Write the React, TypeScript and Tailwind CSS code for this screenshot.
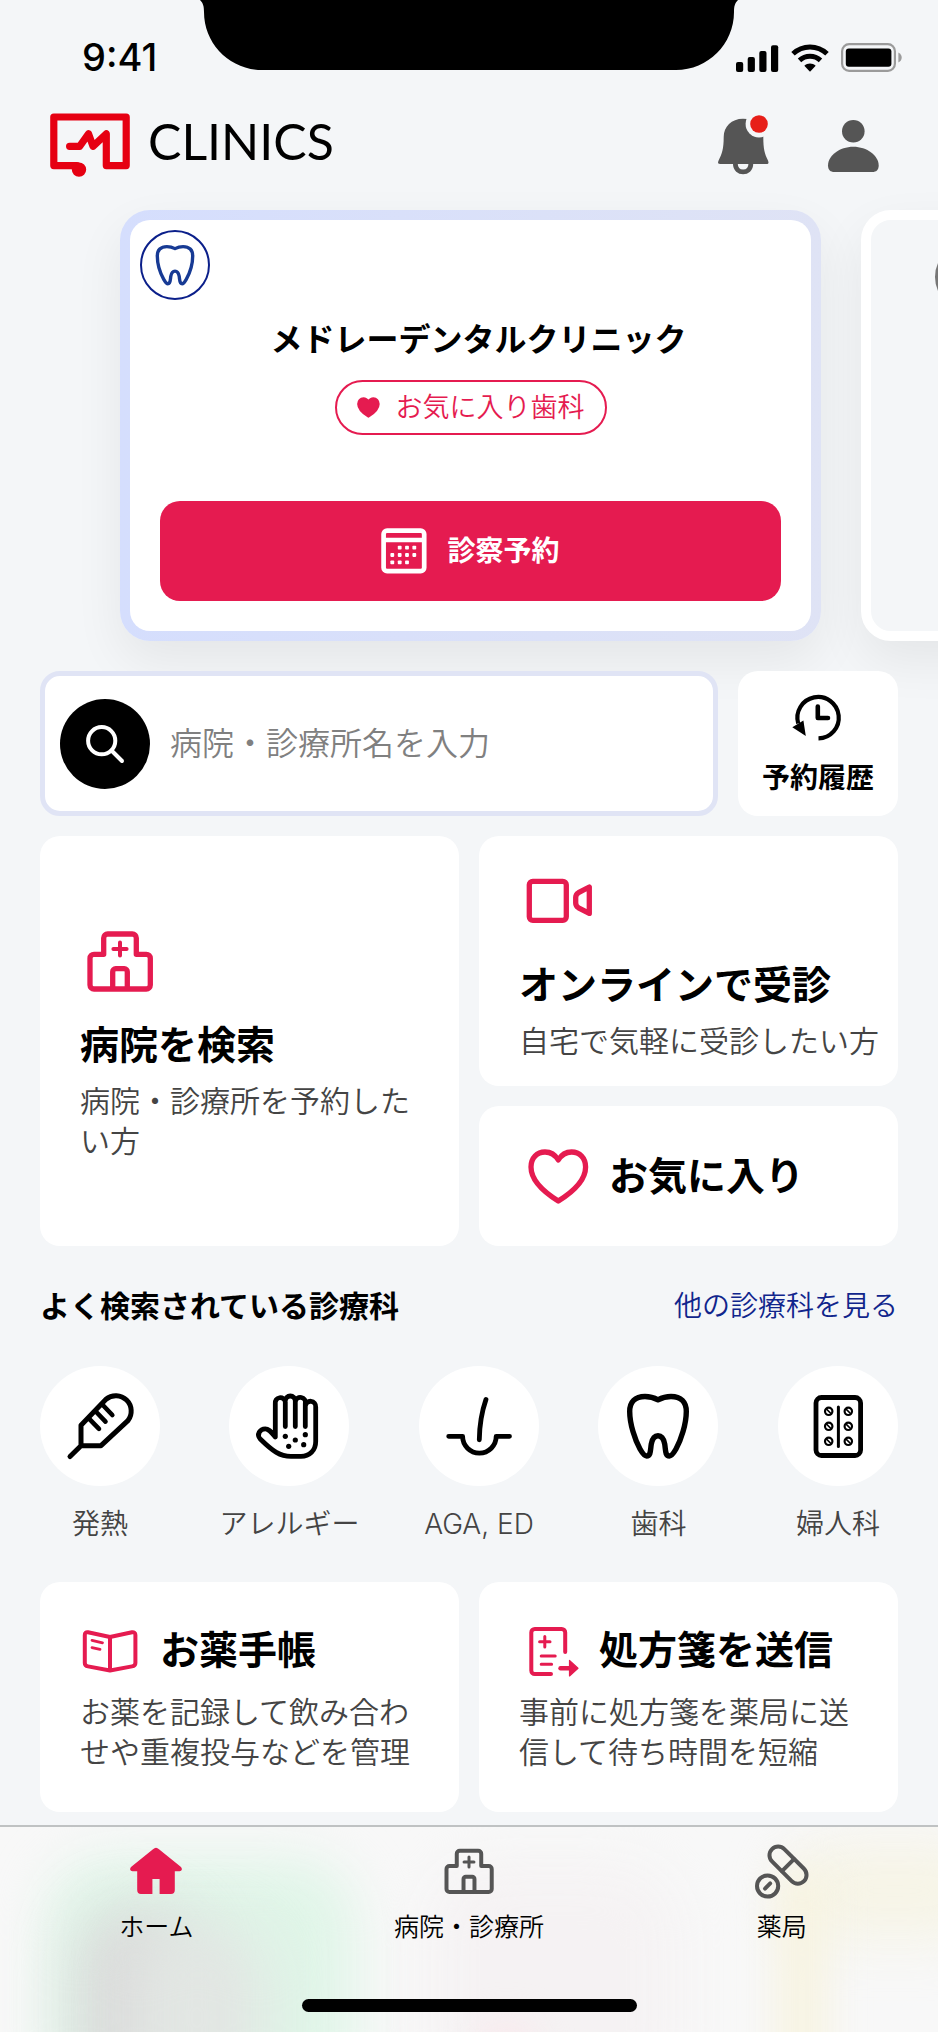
import React from 'react';

type IconProps = { className?: string };

function Tooth({ className }: IconProps) {
  return (
    <svg viewBox="0 0 80 80" className={className} fill="none" stroke="currentColor" strokeWidth="5.4" strokeLinejoin="round" aria-hidden="true">
      <path d="M40 13.8C35.5 11.4 31 10.5 27 10.5C17 10.5 11.7 16 11.7 25.5C11.7 38 17 54 22 63C24 66.5 26 70 28.6 70C33 70 32.3 64 33.3 58C34.2 53 36 49.7 40 49.7C44 49.7 45.8 53 46.7 58C47.7 64 47 70 51.4 70C54 70 56 66.5 58 63C63 54 68.3 38 68.3 25.5C68.3 16 63 10.5 53 10.5C49 10.5 44.5 11.4 40 13.8Z" />
    </svg>
  );
}

function Hospital({ className }: IconProps) {
  return (
    <svg viewBox="0 0 80 80" className={className} fill="none" stroke="currentColor" strokeWidth="5.3" strokeLinejoin="round" aria-hidden="true">
      <path d="M23.7 33.3V17a4 4 0 0 1 4-4h24.6a4 4 0 0 1 4 4v16.3h10a4 4 0 0 1 4 4V64a4 4 0 0 1-4 4H14a4 4 0 0 1-4-4V37.3a4 4 0 0 1 4-4z" />
      <path d="M32.7 68V50.7a3 3 0 0 1 3-3h8.6a3 3 0 0 1 3 3V68" />
      <path d="M40 21.4v13.2M33.4 28h13.2" strokeWidth="4" strokeLinecap="round" />
    </svg>
  );
}

function Video({ className }: IconProps) {
  return (
    <svg viewBox="0 0 80 80" className={className} fill="none" stroke="currentColor" strokeWidth="5.3" strokeLinejoin="round" aria-hidden="true">
      <rect x="10.3" y="20.3" width="37" height="39" rx="3.5" />
      <path d="M70.3 26V52.4L59.5 46.8C57.5 45.6 56.7 44.2 56.7 42V36.5C56.7 34.3 57.5 32.9 59.5 31.7Z" />
    </svg>
  );
}

const heartPath =
  'M39.3 24C36 18.5 31 16 26 16C18 16 12 22 12 31C12 44 24 55.5 39.3 65C54.6 55.5 66.6 44 66.6 31C66.6 22 60.6 16 52.6 16C47.6 16 42.6 18.5 39.3 24Z';

function Heart({ className }: IconProps) {
  return (
    <svg viewBox="0 0 80 80" className={className} fill="none" stroke="currentColor" strokeWidth="5.3" strokeLinejoin="round" aria-hidden="true">
      <path d={heartPath} />
    </svg>
  );
}

function HeartSolid({ className }: IconProps) {
  return (
    <svg viewBox="9 13 61 55" className={className} fill="currentColor" stroke="currentColor" strokeWidth="5.3" strokeLinejoin="round" aria-hidden="true">
      <path d={heartPath} />
    </svg>
  );
}

function Thermometer({ className }: IconProps) {
  return (
    <svg viewBox="0 0 80 80" className={className} fill="none" stroke="currentColor" strokeWidth="5" strokeLinejoin="round" strokeLinecap="round" aria-hidden="true">
      <path d="M10 70.5L21 59.7V39.2L46 13.2A15.4 15.4 0 0 1 67.9 34.6L41 59.7H21" />
      <path d="M42.3 18.5L52.3 29M35.8 25.5L45.5 35.6M29 32.6L39 42.8" strokeWidth="4.6" />
    </svg>
  );
}

function Hand({ className }: IconProps) {
  return (
    <svg viewBox="0 0 80 80" className={className} fill="none" stroke="currentColor" strokeWidth="4.8" strokeLinejoin="round" strokeLinecap="round" aria-hidden="true">
      <path d="M26.3 51V17.5a5 5 0 0 1 10-1.5V40.5M36.3 15a5 5 0 0 1 10 0V40.5M46.3 15.5a5 5 0 0 1 10 2V40.5M56.3 20a5 5 0 0 1 10.4 1V55.5C66.7 64.5 60.5 70.4 52 70.4H42C31 70.4 24 65.5 11.5 53.3C7 48.5 11 42.8 16.3 42.8C19 42.8 21 44.5 26.3 51" />
      <g fill="currentColor" stroke="none">
        <circle cx="36.3" cy="50.3" r="2.6" />
        <circle cx="56.3" cy="48.7" r="2.6" />
        <circle cx="46.3" cy="54" r="2.6" />
        <circle cx="39.7" cy="60.3" r="2.6" />
        <circle cx="54.7" cy="58.7" r="2.6" />
      </g>
    </svg>
  );
}

function Follicle({ className }: IconProps) {
  return (
    <svg viewBox="0 0 80 80" className={className} fill="none" stroke="currentColor" strokeWidth="4.8" strokeLinejoin="round" strokeLinecap="round" aria-hidden="true">
      <path d="M9.7 50.3H23.6A16.8 16.8 0 0 0 57.2 50.3H70.5" />
      <path d="M47 13.4C43 25 40.5 37 40.3 53.8" />
    </svg>
  );
}

function PillPack({ className }: IconProps) {
  const cells = [25.3, 40.3, 55.3].flatMap((y) => [30.7, 50.3].map((x) => [x, y]));
  return (
    <svg viewBox="0 0 80 80" className={className} fill="none" stroke="currentColor" strokeLinecap="round" aria-hidden="true">
      <rect x="18" y="11.5" width="44.6" height="58" rx="5.5" strokeWidth="4.8" />
      <path d="M40.4 21V60.5" strokeWidth="3" />
      {cells.map(([x, y]) => (
        <g key={`${x}-${y}`}>
          <circle cx={x} cy={y} r="3.7" strokeWidth="2.2" />
          <path d={`M${x - 2.2} ${y - 2.2}l4.4 4.4`} strokeWidth="1.6" />
        </g>
      ))}
    </svg>
  );
}

function Book({ className }: IconProps) {
  return (
    <svg viewBox="0 0 60 60" className={className} fill="none" stroke="currentColor" strokeWidth="4" strokeLinejoin="round" strokeLinecap="round" aria-hidden="true">
      <path d="M30 17L8 12.3C6 12 4.8 13 4.8 15V43C4.8 45 6 46 8 46.4L30 50.5L52 46.4C54 46 55.4 45 55.4 43V15C55.4 13 54 12 52 12.3ZM30 17V50.5" />
      <path d="M12 20.3L22.5 22.8M12 27.6L20 29.4" strokeWidth="2.8" />
    </svg>
  );
}

function SendPrescription({ className }: IconProps) {
  return (
    <svg viewBox="0 0 60 60" className={className} fill="none" stroke="currentColor" strokeWidth="4" strokeLinecap="round" aria-hidden="true">
      <path d="M46.2 32V12.5a3.5 3.5 0 0 0-3.5-3.5H15.8a3.5 3.5 0 0 0-3.5 3.5V50.5a3.5 3.5 0 0 0 3.5 3.5H32" />
      <path d="M25.8 16.5v10.4M20.6 21.7H31M22.2 36H36.2M22.2 44.3H32.6" strokeWidth="3" />
      <path d="M41.5 48.3H51" strokeWidth="4.4" />
      <path d="M50.5 40.5V56L59 48.3Z" fill="currentColor" strokeWidth="1.2" strokeLinejoin="round" />
    </svg>
  );
}

function Home({ className }: IconProps) {
  return (
    <svg viewBox="0 0 60 60" className={className} fill="currentColor" aria-hidden="true">
      <path d="M27 8.2Q30 5.2 33 8.2L55 26Q57.4 29.6 53.5 30.2H48.8V49Q48.8 53 45 53H33.6V38H26.4V53H15Q11.2 53 11.2 49V30.2H6.5Q2.6 29.6 5 26Z" />
    </svg>
  );
}

function Medicine({ className }: IconProps) {
  return (
    <svg viewBox="0 0 60 60" className={className} fill="none" stroke="currentColor" strokeWidth="4" strokeLinecap="round" aria-hidden="true">
      <rect x="13.4" y="15.4" width="45.2" height="17.4" rx="8.7" transform="rotate(45 36 24.1)" />
      <path d="M42 18.2L30 30.2" />
      <circle cx="15.6" cy="45" r="10.6" />
      <path d="M13 47.6L18.2 42.4" />
    </svg>
  );
}

function Calendar({ className }: IconProps) {
  const dots = [
    [18.7, 19.7], [26, 19.7], [33.3, 19.7],
    [11.3, 27], [18.7, 27], [26, 27], [33.3, 27],
    [11.3, 34.3], [18.7, 34.3], [26, 34.3],
  ];
  return (
    <svg viewBox="0 0 46 46" className={className} fill="none" stroke="currentColor" strokeWidth="4.7" aria-hidden="true">
      <rect x="2.6" y="2.6" width="40.6" height="40.6" rx="3.5" />
      <path d="M2.6 12H43.2" />
      {dots.map(([x, y]) => (
        <rect key={`${x}-${y}`} x={x - 1.9} y={y - 1.9} width="3.8" height="3.8" rx="0.8" fill="currentColor" stroke="none" />
      ))}
    </svg>
  );
}

function StatusBar() {
  return (
    <div className="relative flex h-[90px] items-start justify-between pl-[82px] pr-9">
      <svg viewBox="0 0 538 70" className="absolute left-1/2 top-0 h-[70px] w-[538px] -translate-x-1/2" aria-hidden="true">
        <path d="M0 0C3 3 4 6 4 12C4 44 30 70 62 70H476C508 70 534 44 534 12C534 6 535 3 538 0Z" />
      </svg>
      <span className="mt-[37px] text-[38px] font-medium leading-10">9:41</span>
      <div className="mt-[43px] flex items-center gap-3">
        <svg viewBox="0 0 43 28" className="h-7 w-[43px]" aria-hidden="true">
          <rect x="0" y="18" width="7.2" height="10" rx="2" />
          <rect x="11.7" y="13" width="7.2" height="15" rx="2" />
          <rect x="23.3" y="7" width="7.2" height="21" rx="2" />
          <rect x="35" y="1.2" width="7.2" height="26.8" rx="2" />
        </svg>
        <svg viewBox="0 0 38 28" className="h-7 w-[38px]" fill="none" stroke="black" strokeWidth="5" aria-hidden="true">
          <path d="M2 9.7A24.6 24.6 0 0 1 36 9.7" />
          <path d="M8.5 16.4A15.4 15.4 0 0 1 29.5 16.4" />
          <path d="M13.3 21.8C16.5 18.6 21.5 18.6 24.7 21.8L19 27.8Z" fill="black" stroke="none" />
        </svg>
        <svg viewBox="0 0 61 29" className="h-[29px] w-[61px]" aria-hidden="true">
          <rect x="1.1" y="1.2" width="52.8" height="26.6" rx="7" fill="none" stroke="#9b9b9b" strokeWidth="2.2" />
          <rect x="4.8" y="5.4" width="45.6" height="18.4" rx="3" />
          <path d="M57.4 9.4C61.8 11.6 61.8 17.4 57.4 19.6Z" fill="#9b9b9b" />
        </svg>
      </div>
    </div>
  );
}

function Header() {
  return (
    <header className="flex h-[110px] items-center justify-between pl-[50px] pr-14">
      <a href="#top" className="flex items-center gap-[18px]">
        <svg viewBox="0 0 80 64" className="h-16 w-20" fill="none" stroke="#e60012" strokeWidth="7.2" strokeLinecap="round" strokeLinejoin="round" aria-hidden="true">
          <path d="M19.6 33.3H29.6L38.5 20.8L43 33.3L56.3 20.8V52.6H76.2V4H3.8V52.6H27" />
          <circle cx="29" cy="56.6" r="3.6" />
        </svg>
        <span className="pb-2 font-['Lato'] text-[50px] font-normal leading-[60px]">CLINICS</span>
      </a>
      <div className="flex gap-[54px]">
        <button type="button" aria-label="お知らせ" className="text-[#555555]">
          <svg viewBox="0 0 56 64" className="h-16 w-14" aria-hidden="true">
            <path fill="currentColor" d="M27 5.7C15.5 5.7 7.7 13.5 7.7 24C7.7 36 6 41 2.6 47.5C1.5 50 2 51 4 51H50.5C52.5 51 53 50 52 47.5C48.6 41 47.3 36 47.3 24C47.3 13.5 38.5 5.7 27 5.7Z" />
            <path d="M19.4 51C19.4 61.5 34.8 61.5 34.8 51" fill="none" stroke="currentColor" strokeWidth="4.8" />
            <circle cx="43" cy="11" r="13.4" fill="#f4f6f8" />
            <circle cx="43" cy="11" r="8.8" fill="#e71f19" />
          </svg>
        </button>
        <button type="button" aria-label="マイページ" className="text-[#555555]">
          <svg viewBox="0 0 56 64" className="h-16 w-14" fill="currentColor" aria-hidden="true">
            <circle cx="27.3" cy="18.3" r="11.3" />
            <path d="M27.3 33.7C41 33.7 52.7 42.5 52.7 52.5C52.7 57 50 59 46.5 59H8.2C4.7 59 2 57 2 52.5C2 42.5 13.6 33.7 27.3 33.7Z" />
          </svg>
        </button>
      </div>
    </header>
  );
}

function Carousel() {
  return (
    <section className="flex gap-10 overflow-x-clip pb-[30px] pl-[120px] pt-[10px]">
      <article className="h-[431px] w-[701px] shrink-0 rounded-[30px] bg-linear-to-r from-[#d5defd] to-[#dfe3f5] p-[10px] shadow-[0_20px_50px_rgba(0,0,0,0.065)]">
        <div className="flex h-full flex-col rounded-[20px] bg-white px-[30px] pb-[30px] pt-[10px]">
          <div className="-ml-5 flex size-[70px] items-center justify-center rounded-full border-2 border-[#0b1f8a] text-[#173a94]">
            <Tooth className="size-[50px]" />
          </div>
          <h2 className="mt-4 pl-4 text-center text-[32px] font-bold leading-[48px]">メドレーデンタルクリニック</h2>
          <div className="mt-4 flex h-[55px] items-center gap-4 self-center rounded-full border-2 border-[#e51b50] px-5 text-[#e51b50]">
            <HeartSolid className="h-[21px] w-[23px]" />
            <span className="text-[27px] leading-10">お気に入り歯科</span>
          </div>
          <button type="button" className="mt-auto flex h-[100px] items-center justify-center gap-5 rounded-[20px] bg-[#e51b50] text-white">
            <Calendar className="size-[46px]" />
            <span className="text-[28px] font-bold leading-10">診察予約</span>
          </button>
        </div>
      </article>
      <article className="h-[431px] w-[701px] shrink-0 rounded-[30px] border-[10px] border-white bg-[#f4f6f8] px-16 py-6 shadow-[0_20px_50px_rgba(0,0,0,0.065)]">
        <div className="size-[66px] rounded-full border-[3px] border-[#777777]" />
      </article>
    </section>
  );
}

function SearchRow() {
  return (
    <div className="relative flex gap-5">
      <form className="flex h-[145px] flex-1 items-center gap-5 rounded-[20px] border-[5px] border-[#e0e4f5] bg-white px-[15px]" onSubmit={(e: React.FormEvent) => e.preventDefault()}>
        <button type="submit" aria-label="検索" className="size-[90px] shrink-0 rounded-full bg-black text-white">
          <svg viewBox="0 0 90 90" className="size-[90px]" fill="none" stroke="currentColor" strokeWidth="4" strokeLinecap="round" aria-hidden="true">
            <circle cx="41.7" cy="41.7" r="13.6" />
            <path d="M51.5 51.5L62 62" />
          </svg>
        </button>
        <input
          type="text"
          aria-label="病院・診療所名"
          placeholder="病院・診療所名を入力"
          className="h-[90px] min-w-0 flex-1 bg-transparent text-[32px] outline-none placeholder:text-[#808080]"
        />
      </form>
      <a href="#history" className="flex w-40 flex-col items-center justify-center gap-3 rounded-[20px] bg-white">
        <svg viewBox="0 0 56 56" className="size-14" fill="none" stroke="currentColor" strokeWidth="4.2" aria-hidden="true">
          <path d="M28.5 46.4A20.7 20.7 0 1 0 8.2 31.5" />
          <path d="M27.8 14.6V26H38" strokeWidth="4.6" strokeLinecap="round" strokeLinejoin="round" />
          <path d="M2.3 35.3L13.4 28.6L15.8 44Z" fill="currentColor" stroke="none" />
        </svg>
        <span className="text-[28px] font-bold leading-9">予約履歴</span>
      </a>
    </div>
  );
}

function MenuGrid() {
  return (
    <div className="relative mt-5 grid grid-cols-2 gap-5">
      <a href="#hospitals" className="row-span-2 flex flex-col justify-center rounded-[20px] bg-white px-10">
        <Hospital className="size-20 text-[#e51b50]" />
        <h2 className="mt-[14px] text-[39px] font-bold leading-[60px]">病院を検索</h2>
        <p className="mt-[6px] text-[30px] leading-10 text-[#444444]">病院・診療所を予約したい方</p>
      </a>
      <a href="#online" className="flex h-[250px] flex-col justify-center rounded-[20px] bg-white pl-10 pr-4">
        <Video className="size-20 text-[#e51b50]" />
        <h2 className="mt-[14px] text-[39px] font-bold leading-[60px]">オンラインで受診</h2>
        <p className="mt-[6px] text-[30px] leading-10 text-[#444444]">自宅で気軽に受診したい方</p>
      </a>
      <a href="#favorites" className="flex h-[140px] items-center gap-[10px] rounded-[20px] bg-white px-10">
        <Heart className="size-20 text-[#e51b50]" />
        <h2 className="text-[39px] font-bold leading-[60px]">お気に入り</h2>
      </a>
    </div>
  );
}

const departments = [
  { label: '発熱', Icon: Thermometer },
  { label: 'アレルギー', Icon: Hand },
  { label: 'AGA, ED', Icon: Follicle },
  { label: '歯科', Icon: Tooth },
  { label: '婦人科', Icon: PillPack },
];

function Departments() {
  return (
    <section>
      <div className="mt-10 flex items-center justify-between">
        <h2 className="text-[30px] font-bold leading-10">よく検索されている診療科</h2>
        <a href="#departments" className="text-[28px] leading-10 text-[#10258c]">他の診療科を見る</a>
      </div>
      <ul className="mt-10 flex justify-between">
        {departments.map(({ label, Icon }) => (
          <li key={label}>
            <a href="#departments" className="flex min-w-[120px] flex-col items-center">
              <span className="flex size-[120px] items-center justify-center rounded-full bg-white">
                <Icon className="size-20" />
              </span>
              <span className="mt-[18px] text-[28px] leading-10 text-[#444444]">{label}</span>
            </a>
          </li>
        ))}
      </ul>
    </section>
  );
}

const services = [
  { title: 'お薬手帳', text: 'お薬を記録して飲み合わせや重複投与などを管理', Icon: Book },
  { title: '処方箋を送信', text: '事前に処方箋を薬局に送信して待ち時間を短縮', Icon: SendPrescription },
];

function Services() {
  return (
    <div className="mt-[38px] grid grid-cols-2 gap-5">
      {services.map(({ title, text, Icon }) => (
        <a key={title} href="#services" className="flex min-h-[230px] flex-col rounded-[20px] bg-white px-10 pb-10 pt-[38px]">
          <div className="flex items-center gap-5">
            <Icon className="size-[60px] text-[#e51b50]" />
            <h2 className="text-[39px] font-bold leading-[60px]">{title}</h2>
          </div>
          <p className="mt-3 text-[30px] leading-10 text-[#444444]">{text}</p>
        </a>
      ))}
    </div>
  );
}

const tabs = [
  { label: 'ホーム', Icon: Home, color: 'text-[#e51b50]' },
  { label: '病院・診療所', Icon: Hospital, color: 'text-[#555555]' },
  { label: '薬局', Icon: Medicine, color: 'text-[#555555]' },
];

function TabBar() {
  return (
    <nav className="relative mt-[13px] flex flex-1 flex-col justify-between overflow-hidden border-t-2 border-[#bfc2c3] bg-[#f8f8f8]">
      <div className="absolute inset-0" aria-hidden="true">
        <div className="absolute -bottom-20 left-[5%] top-8 w-[33%] rounded-[60px] bg-[#e0f5e8] blur-[26px]" />
        <div className="absolute -bottom-20 left-[8%] top-20 w-[13%] rounded-[60px] bg-[#dadada] blur-[28px]" />
        <div className="absolute -bottom-20 left-[14%] top-24 w-[14%] rounded-[60px] bg-[#e2e6e3] blur-[30px]" />
        <div className="absolute -bottom-20 left-[46%] top-10 w-[26%] rounded-[60px] bg-[#f5f2f3] blur-[26px]" />
        <div className="absolute -bottom-10 left-[51%] h-12 w-[6%] rounded-full bg-[#fae8ec] blur-[18px]" />
        <div className="absolute -right-16 left-[84%] top-4 h-24 rounded-[60px] bg-[#f6f4e6] blur-[28px]" />
        <div className="absolute -bottom-20 left-[83%] top-10 w-[5%] rounded-[60px] bg-[#f7f3df] blur-[20px]" />
      </div>
      <ul className="relative grid grid-cols-3 pt-[14px]">
        {tabs.map(({ label, Icon, color }) => (
          <li key={label}>
            <a href="#tab" className="flex flex-col items-center gap-2">
              <Icon className={`size-[60px] ${color}`} />
              <span className="text-[25px] leading-[36px]">{label}</span>
            </a>
          </li>
        ))}
      </ul>
      <div className="relative mx-auto mb-5 h-[13px] w-[335px] rounded-full bg-black" />
    </nav>
  );
}

export default function App() {
  return (
    <div lang="ja" className="flex min-h-screen flex-col overflow-x-clip bg-[#f4f6f8] font-['Inter','Noto_Sans_CJK_JP',sans-serif] font-[350] text-black">
      <StatusBar />
      <Header />
      <Carousel />
      <main className="px-10">
        <SearchRow />
        <MenuGrid />
        <Departments />
        <Services />
      </main>
      <TabBar />
    </div>
  );
}
